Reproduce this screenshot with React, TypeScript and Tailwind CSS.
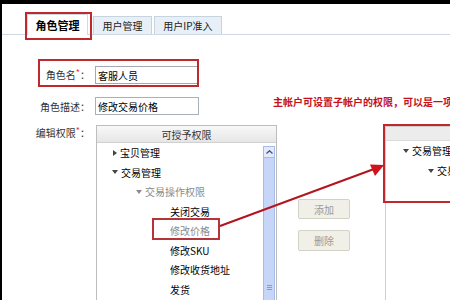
import React from "react";

const Caret = ({ open, gray }: { open?: boolean; gray?: boolean }) =>
  open ? (
    <svg width="6" height="4" viewBox="0 0 6 4" className="mr-[3px] shrink-0">
      <path d="M0 0h6L3 4z" fill={gray ? "#8a8a8a" : "#444"} />
    </svg>
  ) : (
    <svg width="4" height="6" viewBox="0 0 4 6" className="mr-[3px] shrink-0">
      <path d="M0 0l4 3-4 3z" fill="#444" />
    </svg>
  );

const Star = () => <span className="text-[#e03a3a] text-[9px] relative -top-[3px]">*</span>;

export default function App() {
  return (
    <div className="relative w-[450px] h-[300px] overflow-hidden bg-white border-t-4 border-l-2 border-black font-['Noto_Sans_CJK_SC',sans-serif] text-[10px] text-[#222]">
      {/* tabs */}
      <div className="flex items-end h-[31px] border-b border-[#cdd9e5] pl-[25px]">
        <div className="relative -mb-px h-[21px] w-[61px] bg-white border border-b-0 border-[#cdd9e5] flex items-center justify-center text-[11px] font-bold text-black">
          角色管理
          <span className="absolute -left-[3px] -top-[3px] w-[67px] h-[28px] border-2 border-[#c0282d]" />
        </div>
        <div className="ml-[5px] h-[18px] w-[59px] bg-[#e8eff7] border border-b-0 border-[#c6d4e2] flex items-center justify-center text-[10px]">
          用户管理
        </div>
        <div className="ml-[2px] h-[18px] w-[68px] bg-[#e8eff7] border border-b-0 border-[#c6d4e2] flex items-center justify-center text-[10px]">
          用户IP准入
        </div>
      </div>

      {/* role name */}
      <div className="relative flex items-center mt-[31px]">
        <div className="w-[88px] shrink-0 whitespace-nowrap text-right text-[#333]">
          角色名<Star />：
        </div>
        <div className="ml-[5px] h-[18px] w-[104px] shrink-0 border border-[#a3a9b1] flex items-center pl-[2px] text-black">
          客服人员
        </div>
        <span className="absolute left-[36px] -top-[7px] w-[161px] h-[28px] border-2 border-[#c0282d]" />
      </div>

      {/* role description */}
      <div className="flex items-center mt-[13px]">
        <div className="w-[88px] shrink-0 whitespace-nowrap text-right text-[#333]">角色描述：</div>
        <div className="ml-[5px] h-[18px] w-[104px] shrink-0 border border-[#a9b0b8] flex items-center pl-[2px] text-black">
          修改交易价格
        </div>
        <div className="self-start -mt-[1px] ml-[74px] shrink-0 whitespace-nowrap font-bold text-[#c4101a] leading-[12px]">
          主帐户可设置子帐户的权限，可以是一项一项的设置
        </div>
      </div>

      {/* permissions */}
      <div className="flex items-start mt-[10px]">
        <div className="w-[88px] shrink-0 whitespace-nowrap text-right text-[#333] mt-[2px] leading-[12px]">
          编辑权限<Star />：
        </div>

        {/* left panel */}
        <div className="ml-[6px] w-[181px] h-[200px] shrink-0 border border-[#bdbdbd] flex flex-col">
          <div className="h-[17px] shrink-0 border-b border-[#d0d0d0] bg-gradient-to-b from-[#f8f8f8] to-[#e6e6e6] flex items-center justify-center text-[#333]">
            可授予权限
          </div>
          <div className="flex flex-1">
            <div className="flex-1 leading-[19.5px] whitespace-nowrap">
              <div className="flex items-center h-[19.5px] pl-[16px] text-black">
                <Caret />宝贝管理
              </div>
              <div className="flex items-center h-[19.5px] pl-[15px] text-black">
                <Caret open />交易管理
              </div>
              <div className="flex items-center h-[19.5px] pl-[39px] text-[#8a8a8a]">
                <Caret open gray />交易操作权限
              </div>
              <div className="h-[19.5px] pl-[73px] text-black">关闭交易</div>
              <div className="relative h-[19.5px] pl-[73px] text-[#8a8a8a]">
                修改价格
                <span className="absolute left-[55px] -top-[3px] w-[68px] h-[22px] border-2 border-[#b5333a]" />
              </div>
              <div className="h-[19.5px] pl-[73px] text-black">修改SKU</div>
              <div className="h-[19.5px] pl-[73px] text-black">修改收货地址</div>
              <div className="h-[19.5px] pl-[73px] text-black">发货</div>
            </div>
            <div className="w-[12px] shrink-0 mr-px mt-[3px] flex flex-col">
              <div className="h-[12px] border border-[#a8bbe6] bg-[#e3eafb] flex items-center justify-center">
                <svg width="7" height="4" viewBox="0 0 7 4">
                  <path d="M0.5 3.5L3.5 0.8 6.5 3.5" fill="none" stroke="#3d5685" strokeWidth="1.3" />
                </svg>
              </div>
              <div className="flex-1 border border-t-0 border-[#a8bbe6] bg-[#c7d5f8] flex flex-col items-center">
                <div className="mt-[127px] flex flex-col gap-[1px]">
                  <span className="w-[5px] h-px bg-[#8799c4]" />
                  <span className="w-[5px] h-px bg-[#8799c4]" />
                  <span className="w-[5px] h-px bg-[#8799c4]" />
                </div>
              </div>
            </div>
          </div>
        </div>

        {/* middle buttons */}
        <div className="w-[108px] shrink-0 pl-[21px] pt-[74px] flex flex-col">
          <div className="h-[20px] w-[52px] rounded-[2px] border border-[#d3d2c6] bg-[#f1f0e8] flex items-center justify-center text-[#9a9a9a]">
            添加
          </div>
          <div className="mt-[11px] h-[21px] w-[52px] rounded-[2px] border border-[#d3d2c6] bg-[#f1f0e8] flex items-center justify-center text-[#9a9a9a]">
            删除
          </div>
        </div>

        {/* right panel */}
        <div className="relative mt-px w-[200px] h-[200px] shrink-0 border-l border-t border-[#cfcfcf] whitespace-nowrap">
          <div className="h-[14px] bg-[#ececec] border-b border-[#dadada]" />
          <div className="leading-[20px]">
            <div className="flex items-center h-[20px] pl-[17px] text-black">
              <Caret open />交易管理
            </div>
            <div className="flex items-center h-[20px] pl-[42px] text-black">
              <Caret open />交易操作权限
            </div>
          </div>
          <span className="absolute -left-[3px] -top-[3px] w-[120px] h-[79px] border-2 border-[#c0282d]" />
        </div>
      </div>

      {/* annotation arrow */}
      <svg
        className="absolute -left-[2px] -top-[4px] pointer-events-none"
        width="450"
        height="300"
        viewBox="0 0 450 300"
      >
        <line x1="220" y1="226" x2="374" y2="169" stroke="#b3141d" strokeWidth="2" />
        <path d="M384 165L370 164.5 375 176z" fill="#d0121c" />
      </svg>
    </div>
  );
}
